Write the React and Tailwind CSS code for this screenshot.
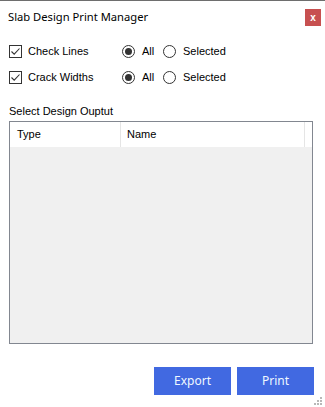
import React, { useState } from 'react';

const sans = { fontFamily: '"Liberation Sans", Arial, sans-serif' };
const ui = { fontFamily: '"Noto Sans", "Liberation Sans", sans-serif' };

const CheckBox = ({ checked, label, onChange }) => (
  <label className="flex items-center cursor-default select-none">
    <span
      onClick={onChange}
      className="w-[13px] h-[13px] border border-[#333333] bg-white flex items-center justify-center"
    >
      {checked && (
        <svg width="11" height="11" viewBox="0 0 11 11">
          <path d="M1.5 5.5 L4.2 8.2 L9.5 2.5" fill="none" stroke="#333333" strokeWidth="1.1" />
        </svg>
      )}
    </span>
    <span className="ml-[6px] text-[11px] text-black leading-[14px]">{label}</span>
  </label>
);

const Radio = ({ checked, label, onChange }) => (
  <label className="flex items-center cursor-default select-none" onClick={onChange}>
    <span className="w-[13px] h-[13px] rounded-full border border-[#333333] bg-white flex items-center justify-center">
      {checked && <span className="w-[7px] h-[7px] rounded-full bg-[#333333]" />}
    </span>
    <span className="ml-[7px] text-[11px] text-black leading-[14px]">{label}</span>
  </label>
);

const OptionRow = ({ label }) => {
  const [checked, setChecked] = useState(true);
  const [mode, setMode] = useState('all');
  return (
    <div className="h-[26px] flex items-center pl-[9px]">
      <div className="w-[113px]">
        <CheckBox checked={checked} label={label} onChange={() => setChecked(!checked)} />
      </div>
      <div className="w-[41px]">
        <Radio checked={mode === 'all'} label="All" onChange={() => setMode('all')} />
      </div>
      <Radio checked={mode === 'selected'} label="Selected" onChange={() => setMode('selected')} />
    </div>
  );
};

export default function App() {
  return (
    <div className="w-[325px] h-[407px] bg-white border-t border-[#6e6e6e] flex flex-col relative overflow-hidden" style={sans}>
      {/* Title bar */}
      <div className="h-[34px] flex justify-between pt-[7px] pl-[8px] pr-[4px]">
        <span className="text-[11.2px] leading-[17px] text-black" style={ui}>
          Slab Design Print Manager
        </span>
        <button className="mt-[1px] w-[16px] h-[17px] bg-[#c75050] text-white text-[10px] font-bold leading-none flex items-center justify-center">
          x
        </button>
      </div>

      {/* Options */}
      <div className="mt-[3px]">
        <OptionRow label="Check Lines" />
        <OptionRow label="Crack Widths" />
      </div>

      <div className="mt-[13px] h-[16px] pl-[9px] text-[11px] leading-[16px] text-black">Select Design Ouptut</div>

      {/* List */}
      <div className="mt-[2px] ml-[9px] w-[304px] h-[223px] border border-[#828790] bg-[#f0f0f0] flex flex-col">
        <div className="h-[25px] bg-white flex text-[11px] text-black">
          <div className="w-[111px] border-r border-[#e5e5e5] pl-[7px] flex items-center">Type</div>
          <div className="w-[184px] border-r border-[#e5e5e5] pl-[6px] flex items-center">Name</div>
          <div className="flex-1" />
        </div>
      </div>

      {/* Buttons */}
      <div className="mt-[23px] flex justify-end gap-[6px] pr-[11px]">
        <button className="w-[77px] h-[28px] bg-[#4169e1] text-[#f0f8ff] text-[12px]" style={ui}>
          Export
        </button>
        <button className="w-[77px] h-[28px] bg-[#4169e1] text-[#f0f8ff] text-[12px]" style={ui}>
          Print
        </button>
      </div>

      {/* Size grip */}
      <svg className="absolute right-[3px] bottom-[2px]" width="8" height="8" viewBox="0 0 8 8">
        <rect x="6" y="0" width="2" height="2" fill="#b8b8b8" />
        <rect x="3" y="3" width="2" height="2" fill="#b8b8b8" />
        <rect x="6" y="3" width="2" height="2" fill="#b8b8b8" />
        <rect x="0" y="6" width="2" height="2" fill="#b8b8b8" />
        <rect x="3" y="6" width="2" height="2" fill="#b8b8b8" />
        <rect x="6" y="6" width="2" height="2" fill="#b8b8b8" />
      </svg>
    </div>
  );
}
